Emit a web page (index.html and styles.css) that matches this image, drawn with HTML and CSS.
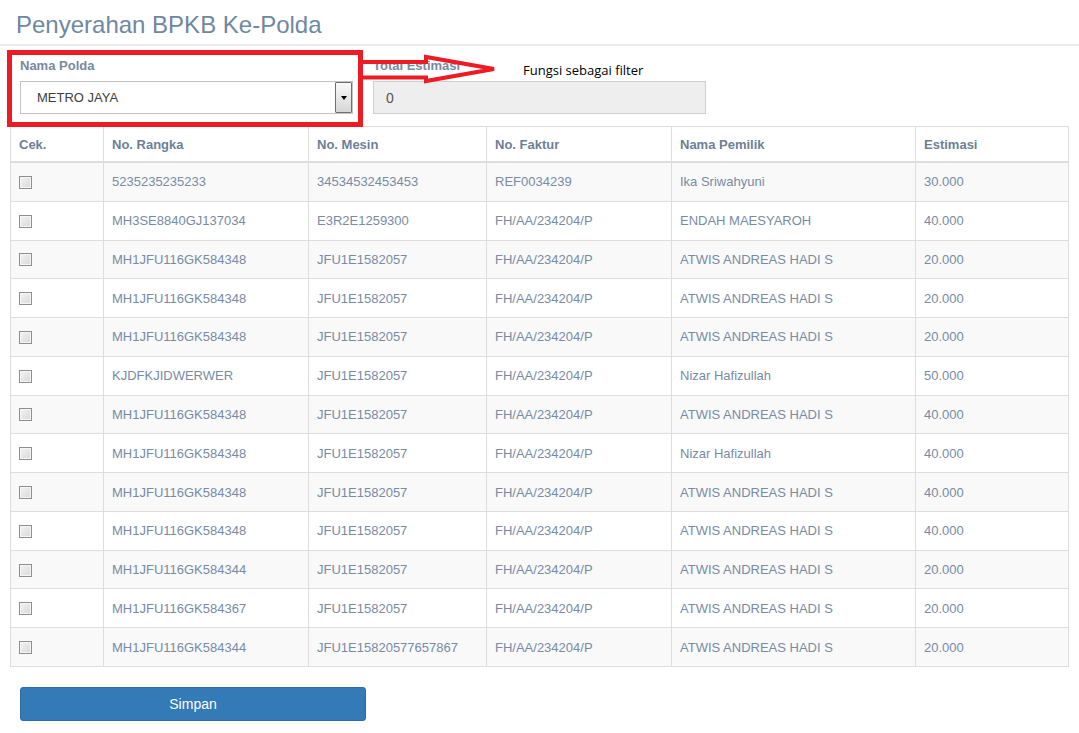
FILE: index.html
```html
<!DOCTYPE html>
<html lang="id">
<head>
<meta charset="utf-8">
<title>Penyerahan BPKB Ke-Polda</title>
<link rel="stylesheet" href="styles.css">
</head>
<body>
<div class="page">
  <h1 class="title">Penyerahan BPKB Ke-Polda</h1>

  <div class="filters">
    <div class="field">
      <label class="field-label">Nama Polda</label>
      <div class="select">
        <span class="select-value">METRO JAYA</span>
        <span class="select-btn"><span class="caret"></span></span>
      </div>
    </div>
    <div class="field">
      <label class="field-label">Total Estimasi</label>
      <div class="input readonly">0</div>
    </div>
  </div>

  <table class="grid">
    <colgroup>
      <col class="c-cek"><col class="c-rangka"><col class="c-mesin"><col class="c-faktur"><col class="c-pemilik"><col class="c-est">
    </colgroup>
    <thead>
      <tr><th>Cek.</th><th>No. Rangka</th><th>No. Mesin</th><th>No. Faktur</th><th>Nama Pemilik</th><th>Estimasi</th></tr>
    </thead>
    <tbody>
      <tr><td><span class="cb"></span></td><td>5235235235233</td><td>34534532453453</td><td>REF0034239</td><td>Ika Sriwahyuni</td><td>30.000</td></tr>
      <tr><td><span class="cb"></span></td><td>MH3SE8840GJ137034</td><td>E3R2E1259300</td><td>FH/AA/234204/P</td><td>ENDAH MAESYAROH</td><td>40.000</td></tr>
      <tr><td><span class="cb"></span></td><td>MH1JFU116GK584348</td><td>JFU1E1582057</td><td>FH/AA/234204/P</td><td>ATWIS ANDREAS HADI S</td><td>20.000</td></tr>
      <tr><td><span class="cb"></span></td><td>MH1JFU116GK584348</td><td>JFU1E1582057</td><td>FH/AA/234204/P</td><td>ATWIS ANDREAS HADI S</td><td>20.000</td></tr>
      <tr><td><span class="cb"></span></td><td>MH1JFU116GK584348</td><td>JFU1E1582057</td><td>FH/AA/234204/P</td><td>ATWIS ANDREAS HADI S</td><td>20.000</td></tr>
      <tr><td><span class="cb"></span></td><td>KJDFKJIDWERWER</td><td>JFU1E1582057</td><td>FH/AA/234204/P</td><td>Nizar Hafizullah</td><td>50.000</td></tr>
      <tr><td><span class="cb"></span></td><td>MH1JFU116GK584348</td><td>JFU1E1582057</td><td>FH/AA/234204/P</td><td>ATWIS ANDREAS HADI S</td><td>40.000</td></tr>
      <tr><td><span class="cb"></span></td><td>MH1JFU116GK584348</td><td>JFU1E1582057</td><td>FH/AA/234204/P</td><td>Nizar Hafizullah</td><td>40.000</td></tr>
      <tr><td><span class="cb"></span></td><td>MH1JFU116GK584348</td><td>JFU1E1582057</td><td>FH/AA/234204/P</td><td>ATWIS ANDREAS HADI S</td><td>40.000</td></tr>
      <tr><td><span class="cb"></span></td><td>MH1JFU116GK584348</td><td>JFU1E1582057</td><td>FH/AA/234204/P</td><td>ATWIS ANDREAS HADI S</td><td>40.000</td></tr>
      <tr><td><span class="cb"></span></td><td>MH1JFU116GK584344</td><td>JFU1E1582057</td><td>FH/AA/234204/P</td><td>ATWIS ANDREAS HADI S</td><td>20.000</td></tr>
      <tr><td><span class="cb"></span></td><td>MH1JFU116GK584367</td><td>JFU1E1582057</td><td>FH/AA/234204/P</td><td>ATWIS ANDREAS HADI S</td><td>20.000</td></tr>
      <tr><td><span class="cb"></span></td><td>MH1JFU116GK584344</td><td>JFU1E15820577657867</td><td>FH/AA/234204/P</td><td>ATWIS ANDREAS HADI S</td><td>20.000</td></tr>
    </tbody>
  </table>

  <div class="actions">
    <button class="btn-primary" type="button">Simpan</button>
  </div>

  <div class="annot-box"></div>
  <svg class="annot-arrow" width="140" height="36" viewBox="0 0 140 36">
    <path d="M0 12 L65 12 L65 7 L133 19 L65 31 L65 27.5 L0 27.5" fill="none" stroke="#ed1c24" stroke-width="4" stroke-linejoin="miter"/>
  </svg>
  <div class="annot-text">Fungsi sebagai filter</div>
</div>
</body>
</html>
```

FILE: styles.css
```css
html, body {
  margin: 0;
  padding: 0;
  background: #fff;
}

body {
  font-family: "Liberation Sans", Arial, sans-serif;
  font-size: 13px;
  color: #778ba5;
}

.page {
  position: relative;
  padding: 0 11px 0 10px;
}

.title {
  margin: 0 -11px 0 -10px;
  padding: 10px 16px 4px;
  font-weight: normal;
  font-size: 24px;
  line-height: 30px;
  color: #6f88a1;
  border-bottom: 2px solid #e9ebee;
}

.filters {
  display: flex;
  gap: 20px;
  padding: 11px 10px 0;
  margin-bottom: 12px;
}

.field {
  width: 333px;
  display: flex;
  flex-direction: column;
}

.field-label {
  font-weight: bold;
  font-size: 13px;
  line-height: 18px;
  color: #7889a0;
  margin-bottom: 6px;
}

.select {
  height: 33px;
  box-sizing: border-box;
  border: 1px solid #c3c3c3;
  background: #fff;
  display: flex;
  align-items: center;
  justify-content: space-between;
  padding-left: 16px;
}

.select-value {
  color: #3d3d3d;
  font-size: 13px;
}

.select-btn {
  width: 17px;
  height: 31px;
  box-sizing: border-box;
  border: 1px solid #707070;
  border-radius: 1px;
  background: linear-gradient(#fafafa, #d6d6d6);
  display: flex;
  align-items: center;
  justify-content: center;
}

.caret {
  width: 0;
  height: 0;
  border-left: 3px solid transparent;
  border-right: 3px solid transparent;
  border-top: 4px solid #000;
  margin-top: 1px;
}

.input {
  height: 33px;
  box-sizing: border-box;
  border: 1px solid #cfcfcf;
  padding-left: 12px;
  display: flex;
  align-items: center;
  font-size: 14px;
  color: #555;
}

.input.readonly {
  background: #eee;
}

.grid {
  width: 1058px;
  border-collapse: collapse;
  table-layout: fixed;
  border: 1px solid #ddd;
}

.c-cek { width: 93px; }
.c-rangka { width: 205px; }
.c-mesin { width: 178px; }
.c-faktur { width: 185px; }
.c-pemilik { width: 244px; }
.c-est { width: 153px; }

.grid th,
.grid td {
  border: 1px solid #ddd;
  padding: 0 8px;
  text-align: left;
  white-space: nowrap;
  overflow: hidden;
}

.grid th {
  height: 34px;
  font-weight: bold;
  color: #6d7f96;
  border-bottom: 2px solid #ddd;
}

.grid td {
  height: 37.77px;
}

.grid tbody tr:nth-child(odd) td {
  background: #f9f9f9;
}

.cb {
  display: block;
  width: 13px;
  height: 13px;
  box-sizing: border-box;
  border: 1px solid #8e8e8e;
  background: linear-gradient(135deg, #f4f4f4, #d8d8d8);
  box-shadow: inset 0 0 0 1px #f6f6f6;
  margin-top: 1px;
}

.actions {
  padding: 20px 10px 0;
}

.btn-primary {
  width: 346px;
  height: 34px;
  background: #337ab7;
  border: 1px solid #2e6da4;
  border-radius: 3px;
  color: #fff;
  font-family: "Liberation Sans", Arial, sans-serif;
  font-size: 14px;
  padding: 0;
}

/* annotation overlay */
.annot-box {
  position: absolute;
  left: 7px;
  top: 50px;
  width: 356px;
  height: 77px;
  box-sizing: border-box;
  border: 5px solid #ed1c24;
}

.annot-arrow {
  position: absolute;
  left: 361px;
  top: 50px;
}

.annot-text {
  position: absolute;
  left: 523px;
  top: 62px;
  font-family: "Open Sans", sans-serif;
  font-size: 13px;
  line-height: 17px;
  color: #000;
}
```
